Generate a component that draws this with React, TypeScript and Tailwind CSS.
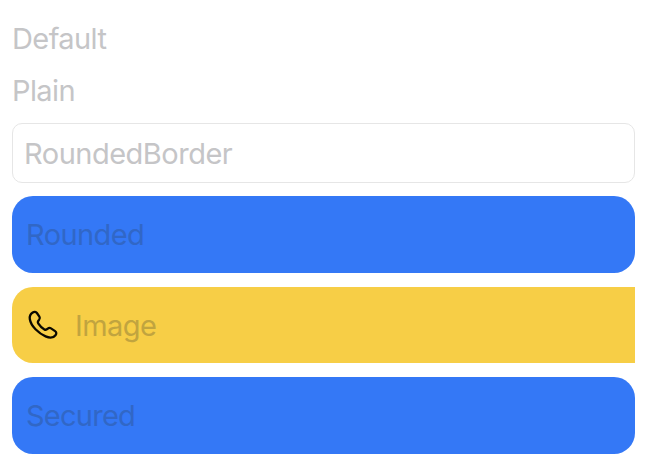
function PhoneIcon() {
  return (
    <svg className="h-8 w-8 shrink-0" viewBox="0 0 32 32" fill="none" stroke="#0b0900" strokeWidth="2.3" strokeLinejoin="round" strokeLinecap="round">
      <path d="M5.7 3.5C7.2 2.4 8.9 2.6 9.9 4L12.4 7.6C13.2 8.8 13 9.8 12.1 10.8C10.8 12.1 10.4 12.9 11.2 14.3C12.8 16.8 15 19 17.4 20.4C18.8 21.2 19.5 20.9 20.8 19.7C21.8 18.8 22.9 18.7 24 19.4L28.1 22.1C29.6 23.1 29.6 24.8 28.5 26.2C26.6 28.7 23 29.4 18.6 27.4C15.2 25.9 11.8 23.5 8.5 20.2C5.3 17 3.3 13.2 2.8 10C2.4 7.1 3.6 4.9 5.7 3.5Z" />
    </svg>
  );
}

const text = "font-['Inter',sans-serif] text-[29px] leading-[36px] whitespace-nowrap";

export default function App() {
  return (
    <main className="flex h-[468px] w-[652px] flex-col bg-white pt-[21px] pr-[17px] pl-3">
      <div className={`${text} h-[52px] tracking-[-0.6px] text-[#c5c5c7]`}>Default</div>
      <div className={`${text} h-[50px] tracking-[-0.6px] text-[#c5c5c7]`}>Plain</div>
      <div className="flex h-[60px] shrink-0 items-center rounded-[10px] border border-[#e6e6e6] pt-px pl-[11px]">
        <span className={`${text} tracking-[-0.5px] text-[#c5c5c7]`}>RoundedBorder</span>
      </div>
      <div className="mt-[13px] flex h-[76.5px] shrink-0 items-center rounded-[21px] bg-[#3478f6] pt-[2px] pl-[14px]">
        <span className={`${text} tracking-[-0.6px] text-[#3167c6]`}>Rounded</span>
      </div>
      <div className="mt-[14px] flex h-[76.5px] shrink-0 items-center rounded-l-[21px] bg-[#f7ce46] pl-[15px]">
        <PhoneIcon />
        <span className={`${text} ml-4 pt-[3px] tracking-[-0.55px] text-[#c1a43f]`}>Image</span>
      </div>
      <div className="mt-[14px] flex h-[76.5px] shrink-0 items-center rounded-[21px] bg-[#3478f6] pt-[2px] pl-[14px]">
        <span className={`${text} tracking-[-0.75px] text-[#3167c6]`}>Secured</span>
      </div>
    </main>
  );
}
